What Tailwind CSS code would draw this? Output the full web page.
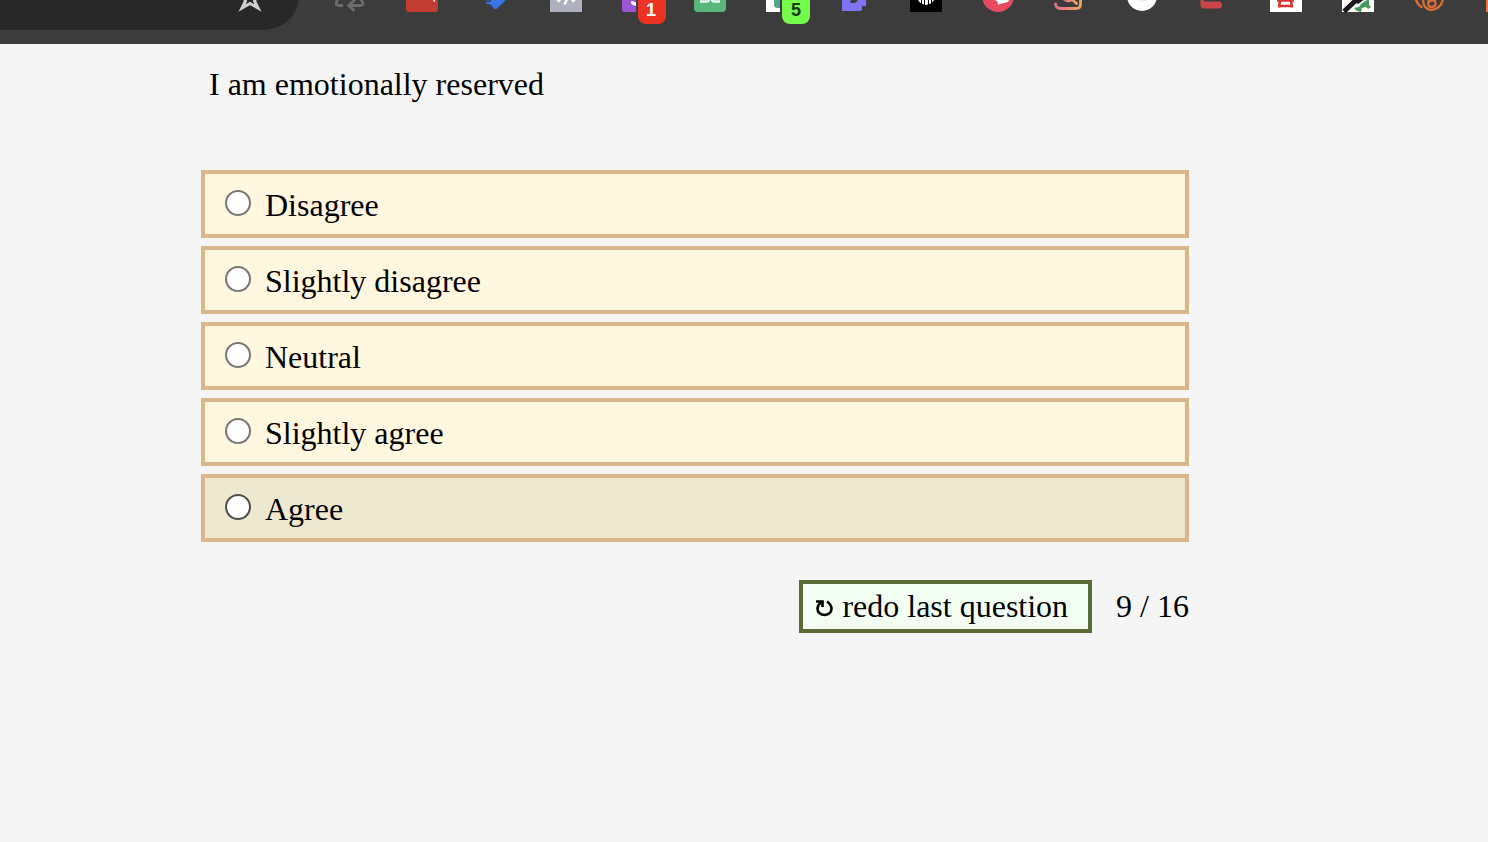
<!DOCTYPE html>
<html lang="en">
<head>
<meta charset="utf-8">
<title>Personality test</title>
<meta name="viewport" content="width=device-width, initial-scale=1">
<script src="https://cdn.jsdelivr.net/npm/@tailwindcss/browser@4"></script>
</head>
<body class="min-h-screen bg-[#f5f5f5] font-['Liberation_Serif',serif] text-[32px] leading-9 text-black">
<header class="flex h-11 items-start overflow-hidden bg-[#3c3c3c]">
  <div class="mr-9 flex h-[30px] w-[298px] shrink-0 justify-end rounded-br-[36px_30px] bg-[#282828] pr-8">
    <button aria-label="Bookmark" class="h-6 w-8"><svg class="h-6 w-8" viewBox="0 0 32 24"><path d="M9 -4 L11.500 1 L8 8 L16 3.500 L24 8 L20.500 1 L23 -4" fill="none" stroke="#d0d0d0" stroke-width="3"/></svg></button>
  </div>
  <div class="flex shrink-0 gap-10">
    <button aria-label="Recycle" class="h-6 w-8"><svg class="h-6 w-8" viewBox="0 0 32 24" fill="none" stroke="#6c6c6c" stroke-width="2.800" stroke-linecap="round" stroke-linejoin="round"><path d="M4 -2 L2.500 2 Q1.500 5.500 5 5.500 H8"/><path d="M26 -2 L28.500 2 Q30 5.500 26 5.500 H15 M20 0.500 L14.500 5.500 L19.500 10"/></svg></button>
    <button aria-label="Red extension" class="h-6 w-8"><svg class="h-6 w-8" viewBox="0 0 32 24"><rect y="-20" width="32" height="32" rx="3" fill="#c33c31"/><path d="M27 0h2v2h-1z" fill="#f3dad7"/></svg></button>
    <button aria-label="Tasks" class="h-6 w-8"><svg class="h-6 w-8" viewBox="0 0 32 24"><path d="M7 -1 H28 L27 1 L19 8.500 Q17.500 9.800 16 8.500 L12 4 Q9 5 8 3 Z" fill="#3775e3"/><path d="M7 1 L11 1.500 L15 -2" fill="none" stroke="#3c3c3c" stroke-width="1.500"/></svg></button>
    <button aria-label="Code" class="h-6 w-8"><svg class="h-6 w-8" viewBox="0 0 32 24"><path d="M0 0h32v12H0z" fill="#aeb0bd"/><path d="M6 -2l4 3.500M26 -2l-4 3.500" stroke="#fff" stroke-width="3"/><path d="M17 -1L14.500 4.500" stroke="#fff" stroke-width="2.600"/></svg></button>
    <button aria-label="Purple extension, 1 notification" class="relative h-6 w-8"><svg class="h-6 w-8" viewBox="0 0 32 24"><path d="M0 0h14v12H2Q0 12 0 10z" fill="#9c55d5"/><path d="M9 1Q11 6 14 5V2Q12 3 11 1z" fill="#fff"/><path d="M10 2Q11 5 14 4" fill="none" stroke="#fff" stroke-width="2.500"/></svg><span class="absolute top-0 left-4 flex h-6 w-7 items-center justify-center rounded-b-lg bg-[#eb3223] pr-0.5 pb-1 font-['Liberation_Sans',sans-serif] text-lg leading-5 font-bold text-white">1</span></button>
    <button aria-label="Green extension" class="h-6 w-8"><svg class="h-6 w-8" viewBox="0 0 32 24"><rect y="-20" width="32" height="32" rx="4" fill="#58b87b"/><path d="M6 1.500H13Q15 1.500 15 -1M26 1.500H20Q18 1.500 18 -1M7 -1.500H12" fill="none" stroke="#eefaf1" stroke-width="2.400"/></svg></button>
    <button aria-label="Reader, 5 notifications" class="relative h-6 w-8"><svg class="h-6 w-8" viewBox="0 0 32 24"><path d="M0 0h14v12H0z" fill="#fff"/><path d="M8 -4h6V8h-2Q8 8 8 5z" fill="#52a68a"/></svg><span class="absolute top-0 left-4 flex h-6 w-7 items-center justify-center rounded-b-lg bg-[#75fb4c] pb-1 font-['Liberation_Sans',sans-serif] text-lg leading-5 font-bold text-[#153b0c]">5</span></button>
    <button aria-label="Violet extension" class="h-6 w-8"><svg class="h-6 w-8" viewBox="0 0 32 24"><path d="M4 0H28V5Q28 6 27 6H24V9Q24 11 22 11H4z" fill="#7f74f4"/><path d="M12.500 0V3H17L19.500 1V0z" fill="#3c3c3c"/></svg></button>
    <button aria-label="Black extension" class="h-6 w-8"><svg class="h-6 w-8" viewBox="0 0 32 24"><path d="M0 0h32v12H0z"/><path d="M8 0H24Q22 4 16 5Q10 4 8 0z" fill="#fff"/><path d="M11.500 0V4M14.500 0V5M18.500 0V5M21.500 0V4" stroke="#000"/></svg></button>
    <button aria-label="Pink extension" class="h-6 w-8"><svg class="h-6 w-8" viewBox="0 0 32 24"><circle cx="16" cy="-4" r="16" fill="#e84b60"/><path d="M8 0L15 -2L17 0H27L26 2L16 4.500L15.500 1.500L13 0z" fill="#fff"/></svg></button>
    <button aria-label="Image search" class="h-6 w-8"><svg class="h-6 w-8" viewBox="0 0 32 24"><defs><linearGradient id="warm"><stop stop-color="#df6f8d"/><stop offset="1" stop-color="#eda362"/></linearGradient></defs><g fill="none" stroke="url(#warm)" stroke-width="2.800" stroke-linecap="round"><path d="M1.500 4Q2 8.500 7 8.500H22Q26.500 8.500 26.500 4V-2"/><path d="M10 -1Q15 2.500 18 -.500L22.500 3.500"/></g></svg></button>
    <button aria-label="White extension" class="h-6 w-8"><svg class="h-6 w-8" viewBox="0 0 32 24"><circle cx="16" cy="-4" r="15" fill="#fff"/><path d="M13 0h7" stroke="#ccc" stroke-width=".8"/></svg></button>
    <button aria-label="Red mark" class="h-6 w-8"><svg class="h-6 w-8" viewBox="0 0 32 24"><path d="M2.500 0H6Q5 1.500 7 1.500H20.500A3.500 3.500 0 0 1 20.500 8.500H6Q2.500 8.500 2.500 4.500z" fill="#ca4649"/></svg></button>
    <button aria-label="Character extension" class="h-6 w-8"><svg class="h-6 w-8" viewBox="0 0 32 24"><path d="M0 0h32v12H0z" fill="#fff"/><path d="M7 .500H24M10 1L9 7.500M21 1L22 7.500M10 6H21" fill="none" stroke="#d9362e" stroke-width="2.600"/></svg></button>
    <button aria-label="Picker" class="h-6 w-8"><svg class="h-6 w-8" viewBox="0 0 32 24"><path d="M0 0h32v12H0z" fill="#fff"/><path d="M20 3L27 -1L27 5L29 7L26 9L24 7L20 8L19 12L15 11L12 8L17 7z" fill="#459b59"/><path d="M2 11.500L12 2Q14 0 16 1L20 -2" fill="none" stroke="#1c1a20" stroke-width="5"/></svg></button>
    <button aria-label="Orange extension" class="h-6 w-8"><svg class="h-6 w-8" viewBox="0 0 32 24" fill="none" stroke="#d96c37" stroke-width="2.400" stroke-linecap="round"><path d="M2 0Q4 5 7.500 7"/><path d="M9 -1Q9 9 17 10Q27 9 29 -1"/><path d="M15 -1Q13 7 17 7Q23 7 21 1Q18 -1 15 2"/></svg></button>
    <button aria-label="More" class="h-6 w-8"><svg class="h-6 w-8" viewBox="0 0 32 24"><path d="M0 0h32v12H0z" fill="#e67846"/></svg></button>
  </div>
</header>
<main class="mr-[299px] ml-[201px] pt-[22px]">
  <form>
    <fieldset>
      <legend class="mb-[68px] px-2">I am emotionally reserved</legend>
      <div class="flex flex-col gap-2">
        <label class="flex h-[68px] items-center gap-3.5 border-4 border-[#d8b88a] bg-[#fff7df] px-5"><input type="radio" name="answer" class="mb-0.5 size-[26px] appearance-none rounded-full border-2 border-[#767676] bg-white checked:bg-[#767676]"><span class="pt-0.5">Disagree</span></label>
        <label class="flex h-[68px] items-center gap-3.5 border-4 border-[#d8b88a] bg-[#fff7df] px-5"><input type="radio" name="answer" class="mb-0.5 size-[26px] appearance-none rounded-full border-2 border-[#767676] bg-white checked:bg-[#767676]"><span class="pt-0.5">Slightly disagree</span></label>
        <label class="flex h-[68px] items-center gap-3.5 border-4 border-[#d8b88a] bg-[#fff7df] px-5"><input type="radio" name="answer" class="mb-0.5 size-[26px] appearance-none rounded-full border-2 border-[#767676] bg-white checked:bg-[#767676]"><span class="pt-0.5">Neutral</span></label>
        <label class="flex h-[68px] items-center gap-3.5 border-4 border-[#d8b88a] bg-[#fff7df] px-5"><input type="radio" name="answer" class="mb-0.5 size-[26px] appearance-none rounded-full border-2 border-[#767676] bg-white checked:bg-[#767676]"><span class="pt-0.5">Slightly agree</span></label>
        <label class="flex h-[68px] items-center gap-3.5 border-4 border-[#d8b88a] bg-[#eee8d0] px-5"><input type="radio" name="answer" class="mb-0.5 size-[26px] appearance-none rounded-full border-2 border-[#4f4f4f] bg-white checked:bg-[#4f4f4f]"><span class="pt-0.5">Agree</span></label>
      </div>
    </fieldset>
    <div class="mt-[38px] flex items-center justify-end gap-6">
      <button type="button" class="flex h-[53px] items-center gap-2 border-4 border-[#5a6b38] bg-[#f3fff2] pr-5 pb-0.5 pl-3"><svg class="mt-1 h-5 w-[19px]" viewBox="0 0 19 20" fill="none" stroke="#000" stroke-width="2.600"><path d="M1 3.500H7.500V9"/><path d="M6 4.500Q2.500 7 2.500 11A7 6 0 0 0 16.500 11Q16.500 6.500 12 3.500"/></svg><span>redo last question</span></button>
      <span class="pb-0.5">9 / 16</span>
    </div>
  </form>
</main>
</body>
</html>
